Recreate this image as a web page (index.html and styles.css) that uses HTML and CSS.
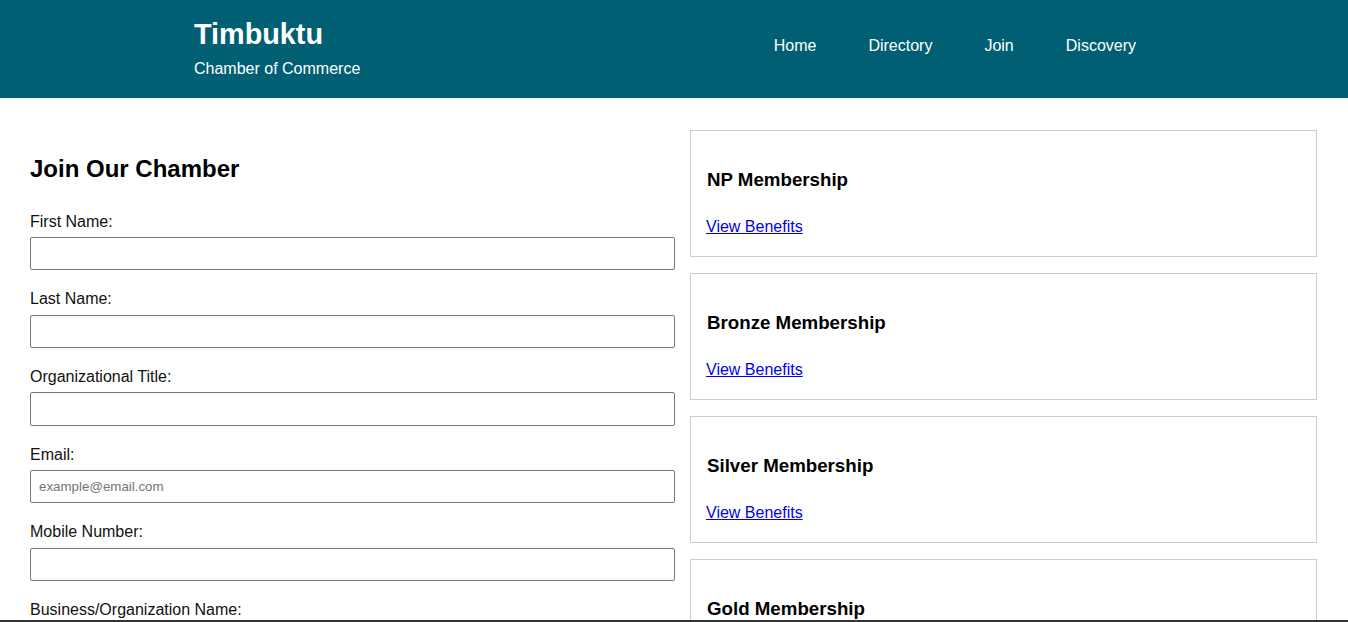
FILE: index.html
```html
<!DOCTYPE html>
<html lang="en">
<head>
<meta charset="utf-8">
<title>Timbuktu Chamber of Commerce - Join</title>
<link rel="stylesheet" href="styles.css">
</head>
<body>
<header class="site-header">
  <div class="header-inner">
    <div class="brand">
      <h1 class="brand-title">Timbuktu</h1>
      <p class="brand-sub">Chamber of Commerce</p>
    </div>
    <nav class="main-nav">
      <ul class="nav-list">
        <li><a class="nav-link" href="#">Home</a></li>
        <li><a class="nav-link" href="#">Directory</a></li>
        <li><a class="nav-link" href="#">Join</a></li>
        <li><a class="nav-link" href="#">Discovery</a></li>
      </ul>
    </nav>
  </div>
</header>
<main class="join-main">
  <section class="join-form-section">
    <h2 class="form-title">Join Our Chamber</h2>
    <form class="join-form">
      <label class="field-label" for="fname">First Name:</label>
      <input class="field-input" id="fname" type="text">
      <label class="field-label" for="lname">Last Name:</label>
      <input class="field-input" id="lname" type="text">
      <label class="field-label" for="otitle">Organizational Title:</label>
      <input class="field-input" id="otitle" type="text">
      <label class="field-label" for="email">Email:</label>
      <input class="field-input" id="email" type="email" placeholder="example@email.com">
      <label class="field-label" for="phone">Mobile Number:</label>
      <input class="field-input" id="phone" type="tel">
      <label class="field-label" for="bname">Business/Organization Name:</label>
      <input class="field-input" id="bname" type="text">
      <label class="field-label" for="desc">Business Description:</label>
      <input class="field-input" id="desc" type="text">
    </form>
  </section>
  <aside class="membership-list">
    <div class="membership-card">
      <h3 class="card-title">NP Membership</h3>
      <a class="card-link" href="#">View Benefits</a>
    </div>
    <div class="membership-card">
      <h3 class="card-title">Bronze Membership</h3>
      <a class="card-link" href="#">View Benefits</a>
    </div>
    <div class="membership-card">
      <h3 class="card-title">Silver Membership</h3>
      <a class="card-link" href="#">View Benefits</a>
    </div>
    <div class="membership-card">
      <h3 class="card-title">Gold Membership</h3>
      <a class="card-link" href="#">View Benefits</a>
    </div>
  </aside>
</main>
<div class="bottom-edge"></div>
</body>
</html>
```
FILE: styles.css
```css
* { box-sizing: border-box; }

body {
  margin: 0;
  font-family: "Liberation Sans", Arial, sans-serif;
  font-size: 16px;
  color: #000;
  background: #fff;
}

.site-header {
  background: #005f73;
  color: #fff;
  height: 98px;
}

.header-inner {
  width: 960px;
  margin: 0 auto;
  display: flex;
  justify-content: space-between;
  align-items: flex-start;
  padding-top: 18px;
}

.brand-title {
  margin: 0 0 9px;
  font-size: 28.8px;
  font-weight: bold;
  line-height: 33px;
}

.brand-sub {
  margin: 0;
  font-size: 16px;
  line-height: 18.4px;
}

.main-nav { margin-top: 19px; }

.nav-list {
  list-style: none;
  margin: 0;
  padding: 0;
  display: flex;
  gap: 16px;
}

.nav-link {
  display: block;
  padding: 0 18px;
  color: #fff;
  text-decoration: none;
  font-size: 16px;
  line-height: 18.4px;
}

.join-main {
  display: grid;
  grid-template-columns: 645fr 627fr;
  gap: 15px;
  padding: 32px 31px 0 30px;
  align-items: start;
}

.form-title {
  margin: 25px 0 30px;
  font-size: 24px;
  font-weight: bold;
  line-height: 27.6px;
}

.join-form {
  display: flex;
  flex-direction: column;
}

.field-label {
  display: block;
  margin-bottom: 6px;
  font-size: 16px;
  line-height: 18.4px;
  color: #111;
}

.field-input {
  display: block;
  width: 100%;
  height: 33.3px;
  margin: 0 0 20px;
  padding: 8px;
  border: 1px solid #767676;
  border-radius: 2px;
  font-family: "Liberation Sans", Arial, sans-serif;
  font-size: 13.333px;
  background: #fff;
}

.field-input::placeholder { color: #757575; }

.membership-list {
  display: flex;
  flex-direction: column;
  gap: 16px;
}

.membership-card {
  border: 1px solid #cccccc;
  height: 127px;
  padding: 19px 15px 0 16px;
}

.card-title {
  margin: 18.5px 0 27.6px;
  font-size: 18.72px;
  font-weight: bold;
  line-height: 21.5px;
}

.card-link {
  display: inline-block;
  margin-left: -1px;
  color: #0000ee;
  text-decoration: underline;
  font-size: 16px;
  line-height: 18.4px;
}

.bottom-edge {
  position: fixed;
  left: 0;
  right: 0;
  bottom: 0;
  height: 2px;
  background: #333;
}
```
